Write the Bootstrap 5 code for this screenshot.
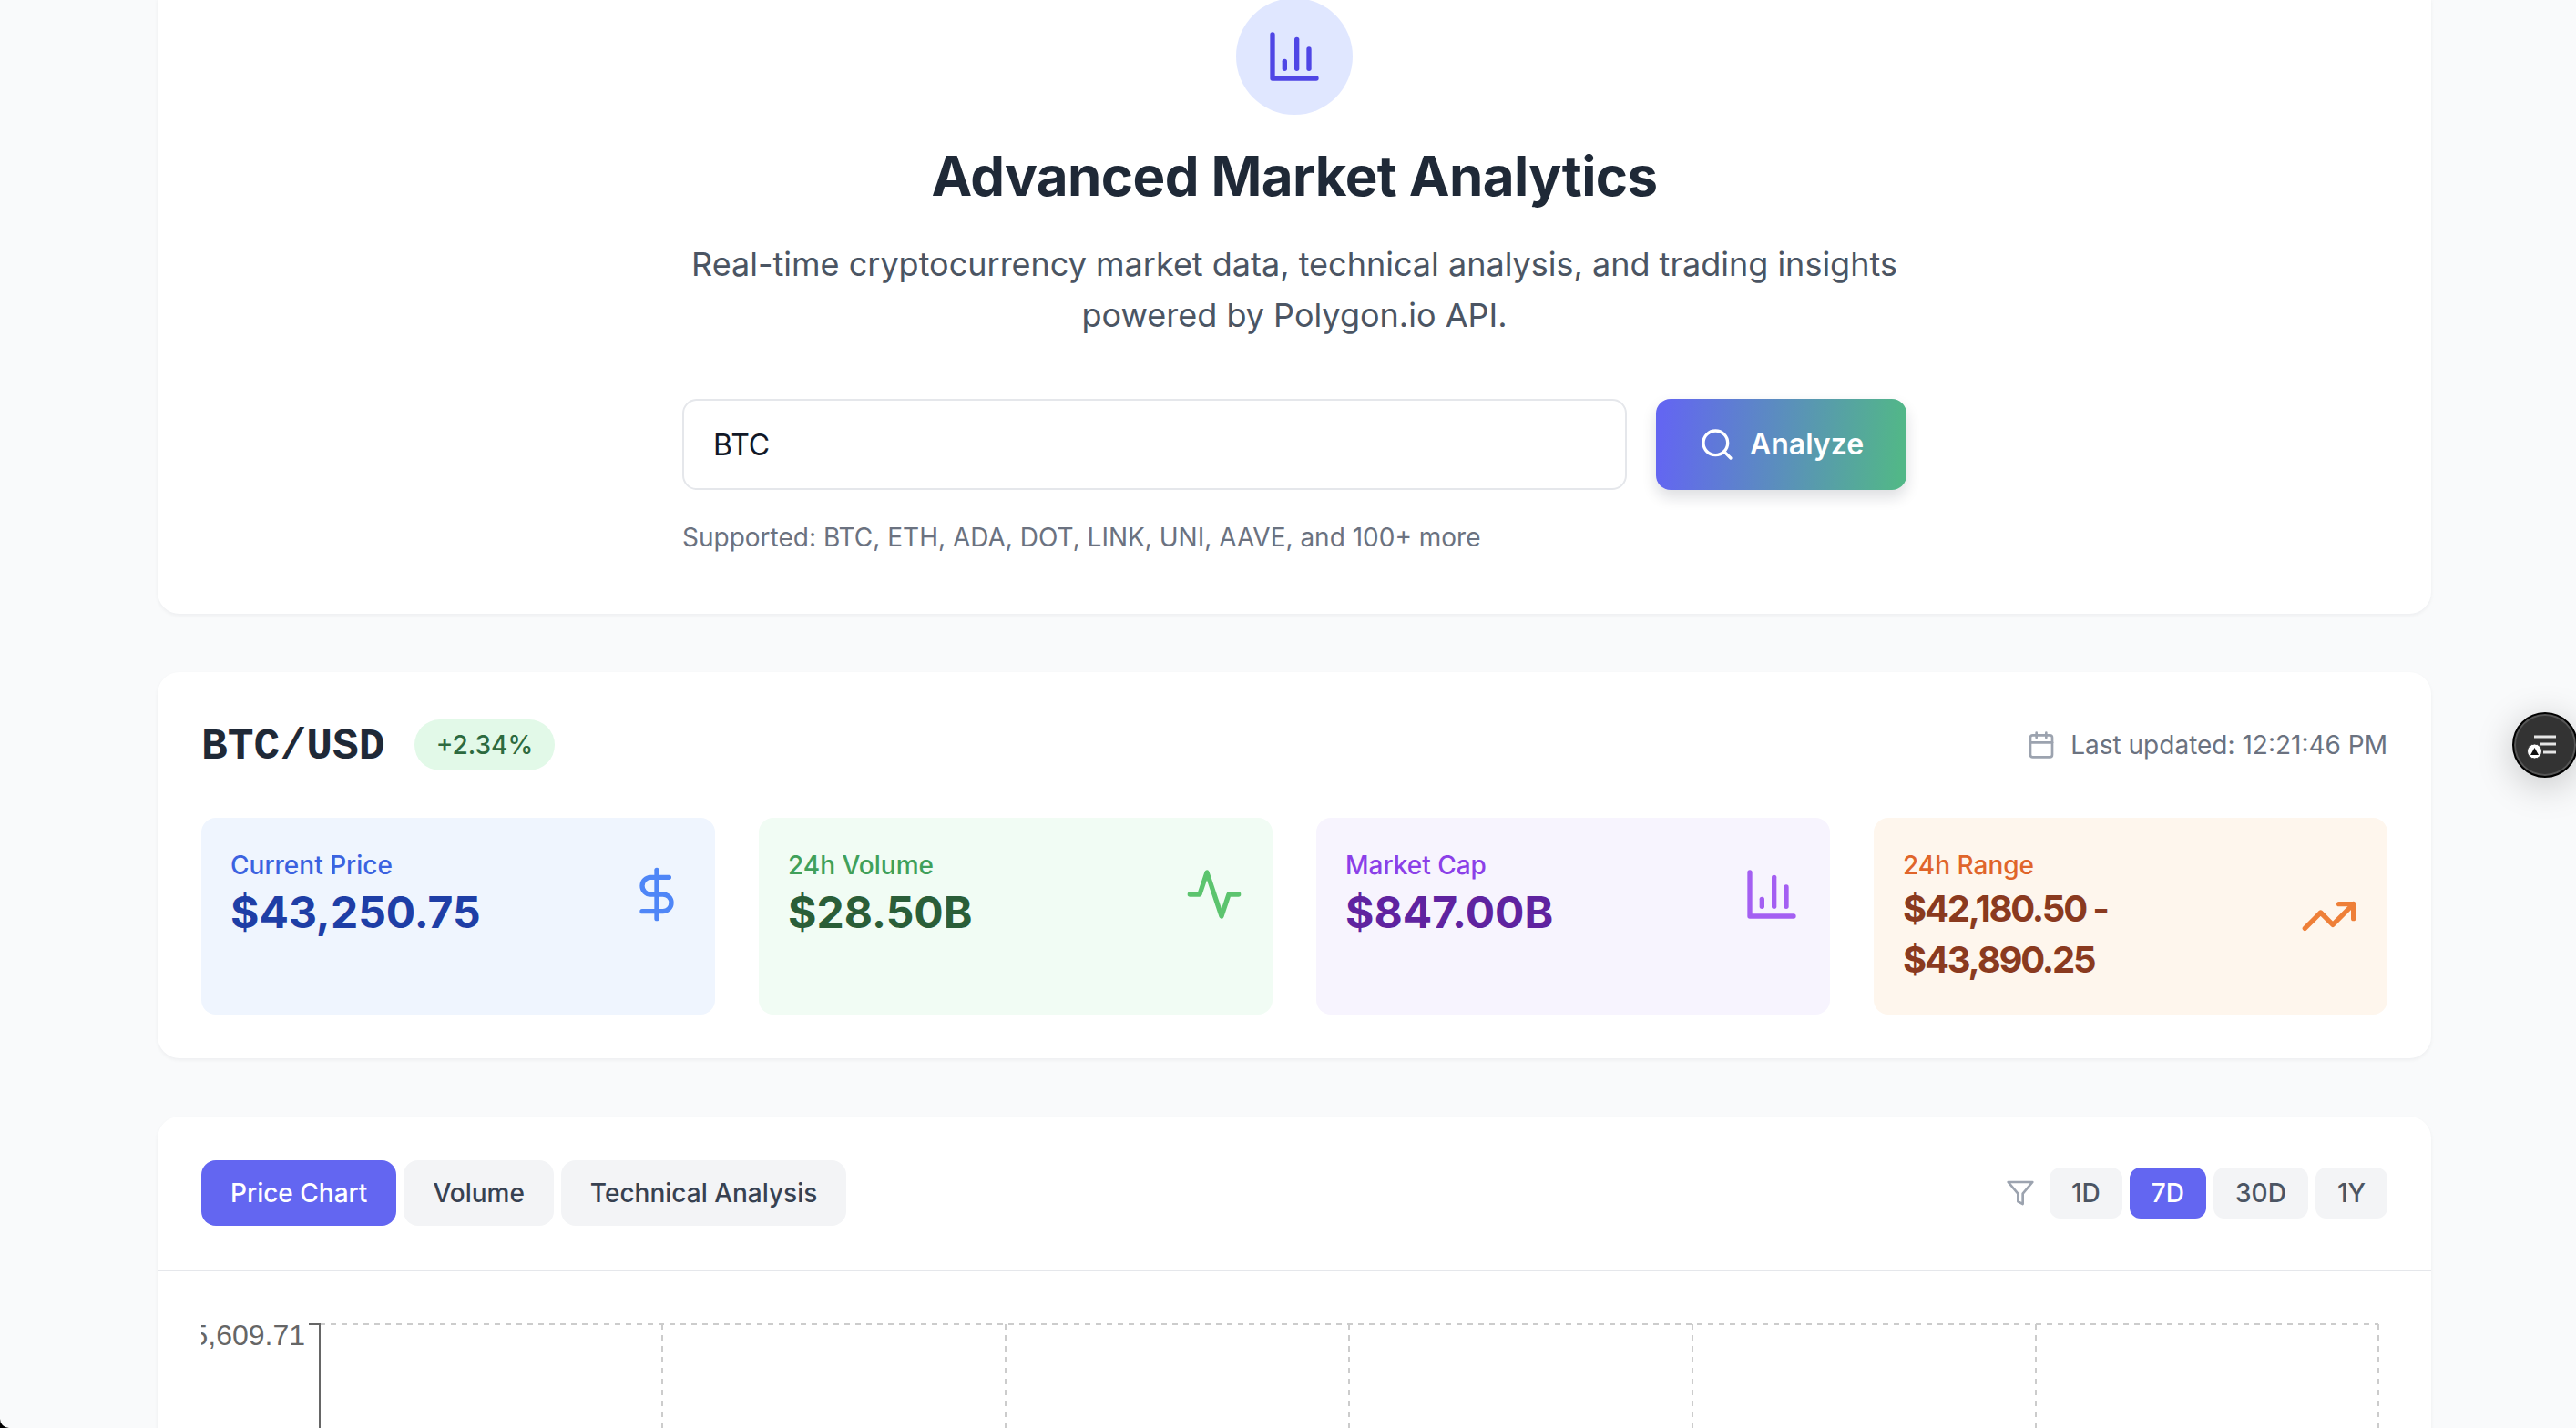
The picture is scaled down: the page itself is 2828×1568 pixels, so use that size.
<!DOCTYPE html>
<html lang="en">

<head>
    <meta charset="UTF-8">
    <meta name="viewport" content="width=device-width, initial-scale=1.0">
    <title>Advanced Market Analytics</title>
    <link href="https://cdn.jsdelivr.net/npm/bootstrap@5.3.0/dist/css/bootstrap.min.css" rel="stylesheet">
    <style>
        html, body { height: 1568px; overflow: hidden; }
        body { background: #f9fafb; font-family: "Inter", "Liberation Sans", sans-serif; color: #1f2937; }
        svg.ico { fill: none; stroke: currentColor; stroke-width: 2; stroke-linecap: round; stroke-linejoin: round; flex: none; }

        .page-wrap { width: 2496px; margin-left: 173px; display: flex; flex-direction: column; gap: 64px; }
        .panel { background: #fff; border-radius: 24px; box-shadow: 0 2px 4px rgba(17, 24, 39, .05); }
        .panel-hero { border-radius: 0 0 24px 24px; padding: 0 64px 64px; margin-top: -2px; }

        .hero-circle { width: 128px; height: 128px; border-radius: 50%; background: #e0e7ff; color: #4f46e5; }
        .hero-title { font-size: 60px; line-height: 70px; font-weight: 700; color: #1f2937; margin: 32px 0 34px; letter-spacing: -.6px; }
        .hero-sub { width: 1344px; font-size: 36px; line-height: 56px; color: #4b5563; margin: 0 auto 64px; }
        .search-box { width: 1344px; }
        .search-input { height: 100px; min-width: 0; font-size: 32px; padding: 0 32px; border: 2px solid #e5e7eb; border-radius: 16px; color: #111827; box-shadow: none; }
        .search-btn { flex: none; width: 275px; height: 100px; border: 0; border-radius: 16px; color: #fff; font-size: 32px; font-weight: 600; background: linear-gradient(95deg, #6366f1 3%, #52b788 97%); box-shadow: 0 8px 16px rgba(17, 24, 39, .14); }
        .search-hint { font-size: 28px; line-height: 40px; color: #6b7280; margin: 32px 0 0; }

        .panel-stats { padding: 48px; }
        .pair-name { font-family: "Liberation Mono", monospace; font-weight: 700; font-size: 48px; line-height: 60px; padding-top: 4px; color: #1f2937; margin: 0; }
        .pair-pill { height: 56px; padding: 0 24px; font-size: 28px; font-weight: 500; border-radius: 28px; background: #e2f9e8; color: #2d6a3f; }
        .updated { font-size: 28px; color: #6b7280; }
        .updated svg { color: #9ca3af; }
        .stat-grid { display: grid; grid-template-columns: repeat(4, 1fr); gap: 48px; margin-top: 48px; }
        .stat-tile { padding: 32px; border-radius: 16px; height: 216px; }
        .stat-label { font-size: 28px; line-height: 40px; font-weight: 500; }
        .stat-value { font-size: 48px; line-height: 64px; font-weight: 700; }
        .stat-value-sm { font-size: 40px; line-height: 56px; font-weight: 700; letter-spacing: -2.2px; }
        .tile-blue { background: #eff5fe; color: #1e3ea6; }
        .tile-blue .stat-label { color: #3b62e0; }
        .tile-blue svg { color: #4f86f7; }
        .tile-green { background: #f1fcf4; color: #2a5e38; }
        .tile-green .stat-label { color: #40a05a; }
        .tile-green svg { color: #5cc46e; }
        .tile-purple { background: #f7f4fe; color: #5f23a0; }
        .tile-purple .stat-label { color: #8b3fe8; }
        .tile-purple svg { color: #a45ff2; }
        .tile-orange { background: #fef6ed; color: #8a3a1f; }
        .tile-orange .stat-label { color: #e0652a; }
        .tile-orange svg { color: #ee7f38; }

        .panel-chart { height: 800px; }
        .chart-head { padding: 48px; border-bottom: 2px solid #e5e7eb; }
        .tab-btn { height: 72px; padding: 0 32px; border: 0; border-radius: 16px; font-size: 28px; font-weight: 500; background: #f3f4f6; color: #374151; }
        .range-btn { height: 56px; padding: 0 24px; border: 0; border-radius: 12px; font-size: 28px; font-weight: 500; background: #f3f4f6; color: #4b5563; }
        .tab-btn.on, .range-btn.on { background: #6366f1; color: #fff; }
        .filter-ico { color: #9ca3af; }
        .chart-svg { display: block; }
        .axis-text { font-family: "Liberation Sans", Arial, sans-serif; font-size: 32px; fill: #666; }

        .float-btn { position: fixed; left: 2758px; top: 782px; width: 72px; height: 72px; border-radius: 50%; background: #333; border: 2px solid #000; box-shadow: inset 0 0 0 2px #555, 0 8px 40px rgba(0, 0, 0, .22); }
        .win-corner { position: fixed; left: 0; bottom: 0; }
    </style>
</head>

<body>

    <div class="page-wrap">

        <!-- Hero + search -->
        <section class="panel panel-hero text-center">
            <div class="hero-circle d-flex align-items-center justify-content-center mx-auto">
                <svg class="ico" width="64" height="64" viewBox="0 0 24 24"><path d="M3 3v18h18" /><path d="M18 17V9" /><path d="M13 17V5" /><path d="M8 17v-3" /></svg>
            </div>
            <h1 class="hero-title">Advanced Market Analytics</h1>
            <p class="hero-sub">Real-time cryptocurrency market data, technical analysis, and trading insights powered by Polygon.io API.</p>
            <div class="search-box mx-auto text-start">
                <form class="d-flex" style="gap:32px">
                    <input type="text" class="form-control search-input flex-grow-1" value="BTC">
                    <button type="button" class="search-btn d-flex align-items-center justify-content-center gap-3">
                        <svg class="ico" width="40" height="40" viewBox="0 0 24 24"><circle cx="11" cy="11" r="8" /><path d="m21 21-4.3-4.3" /></svg>
                        Analyze
                    </button>
                </form>
                <p class="search-hint">Supported: BTC, ETH, ADA, DOT, LINK, UNI, AAVE, and 100+ more</p>
            </div>
        </section>

        <!-- Pair stats -->
        <section class="panel panel-stats">
            <div class="d-flex justify-content-between align-items-center">
                <div class="d-flex align-items-center" style="gap:32px">
                    <h2 class="pair-name">BTC/USD</h2>
                    <span class="pair-pill d-inline-flex align-items-center">+2.34%</span>
                </div>
                <div class="updated d-flex align-items-center gap-3">
                    <svg class="ico" width="32" height="32" viewBox="0 0 24 24"><path d="M8 2v4" /><path d="M16 2v4" /><rect width="18" height="18" x="3" y="4" rx="2" /><path d="M3 10h18" /></svg>
                    Last updated: 12:21:46 PM
                </div>
            </div>
            <div class="stat-grid">
                <div class="stat-tile tile-blue">
                    <div class="d-flex justify-content-between align-items-center">
                        <div>
                            <div class="stat-label">Current Price</div>
                            <div class="stat-value">$43,250.75</div>
                        </div>
                        <svg class="ico" width="64" height="64" viewBox="0 0 24 24"><line x1="12" x2="12" y1="2" y2="22" /><path d="M17 5H9.5a3.5 3.5 0 0 0 0 7h5a3.5 3.5 0 0 1 0 7H6" /></svg>
                    </div>
                </div>
                <div class="stat-tile tile-green">
                    <div class="d-flex justify-content-between align-items-center">
                        <div>
                            <div class="stat-label">24h Volume</div>
                            <div class="stat-value">$28.50B</div>
                        </div>
                        <svg class="ico" width="64" height="64" viewBox="0 0 24 24"><path d="M22 12h-4l-3 9L9 3l-3 9H2" /></svg>
                    </div>
                </div>
                <div class="stat-tile tile-purple">
                    <div class="d-flex justify-content-between align-items-center">
                        <div>
                            <div class="stat-label">Market Cap</div>
                            <div class="stat-value">$847.00B</div>
                        </div>
                        <svg class="ico" width="64" height="64" viewBox="0 0 24 24"><path d="M3 3v18h18" /><path d="M18 17V9" /><path d="M13 17V5" /><path d="M8 17v-3" /></svg>
                    </div>
                </div>
                <div class="stat-tile tile-orange">
                    <div class="d-flex justify-content-between align-items-center">
                        <div>
                            <div class="stat-label">24h Range</div>
                            <div class="stat-value-sm">$42,180.50 -<br>$43,890.25</div>
                        </div>
                        <svg class="ico" width="64" height="64" viewBox="0 0 24 24"><polyline points="22 7 13.5 15.5 8.5 10.5 2 17" /><polyline points="16 7 22 7 22 13" /></svg>
                    </div>
                </div>
            </div>
        </section>

        <!-- Chart -->
        <section class="panel panel-chart">
            <div class="chart-head d-flex justify-content-between align-items-center">
                <div class="d-flex gap-2">
                    <button type="button" class="tab-btn on">Price Chart</button>
                    <button type="button" class="tab-btn">Volume</button>
                    <button type="button" class="tab-btn">Technical Analysis</button>
                </div>
                <div class="d-flex align-items-center gap-2">
                    <svg class="ico filter-ico me-2" width="32" height="32" viewBox="0 0 24 24"><polygon points="22 3 2 3 10 12.46 10 19 14 21 14 12.46 22 3" /></svg>
                    <button type="button" class="range-btn">1D</button>
                    <button type="button" class="range-btn on">7D</button>
                    <button type="button" class="range-btn">30D</button>
                    <button type="button" class="range-btn">1Y</button>
                </div>
            </div>
            <svg class="chart-svg" width="2496" height="400" viewBox="173 1396 2496 400">
                <defs><clipPath id="label-clip"><rect x="221" y="1440" width="200" height="60" /></clipPath></defs>
                <g fill="none" stroke="#ccc" stroke-width="2" stroke-dasharray="6 6">
                    <line x1="351" y1="1454" x2="2611" y2="1454" />
                    <line x1="727" y1="1454" x2="727" y2="1796" />
                    <line x1="1104" y1="1454" x2="1104" y2="1796" />
                    <line x1="1481" y1="1454" x2="1481" y2="1796" />
                    <line x1="1858" y1="1454" x2="1858" y2="1796" />
                    <line x1="2235" y1="1454" x2="2235" y2="1796" />
                    <line x1="2611" y1="1454" x2="2611" y2="1796" />
                </g>
                <path d="M339 1454H351V1796" fill="none" stroke="#666" stroke-width="2" />
                <text class="axis-text" x="335" y="1477" text-anchor="end" clip-path="url(#label-clip)">$45,609.71</text>
            </svg>
        </section>
    </div>

    <!-- Floating widget -->
    <div class="float-btn">
        <svg width="68" height="68" viewBox="0 0 68 68">
            <path d="M22 25H46M28 33H46M32 42H46" stroke="#e5e5e5" stroke-width="3" fill="none" />
            <circle cx="22.5" cy="41" r="8" fill="#fff" stroke="#333" stroke-width="1" />
            <polygon points="22.5,37 27,45 18,45" fill="#111" />
        </svg>
    </div>

    <!-- Window corner of the capture -->
    <svg class="win-corner" width="12" height="12" viewBox="0 0 12 12"><path d="M0 2A10 10 0 0 0 10 12H0Z" fill="#000" /></svg>

    <script src="https://cdn.jsdelivr.net/npm/bootstrap@5.3.0/dist/js/bootstrap.bundle.min.js"></script>

</body>

</html>
